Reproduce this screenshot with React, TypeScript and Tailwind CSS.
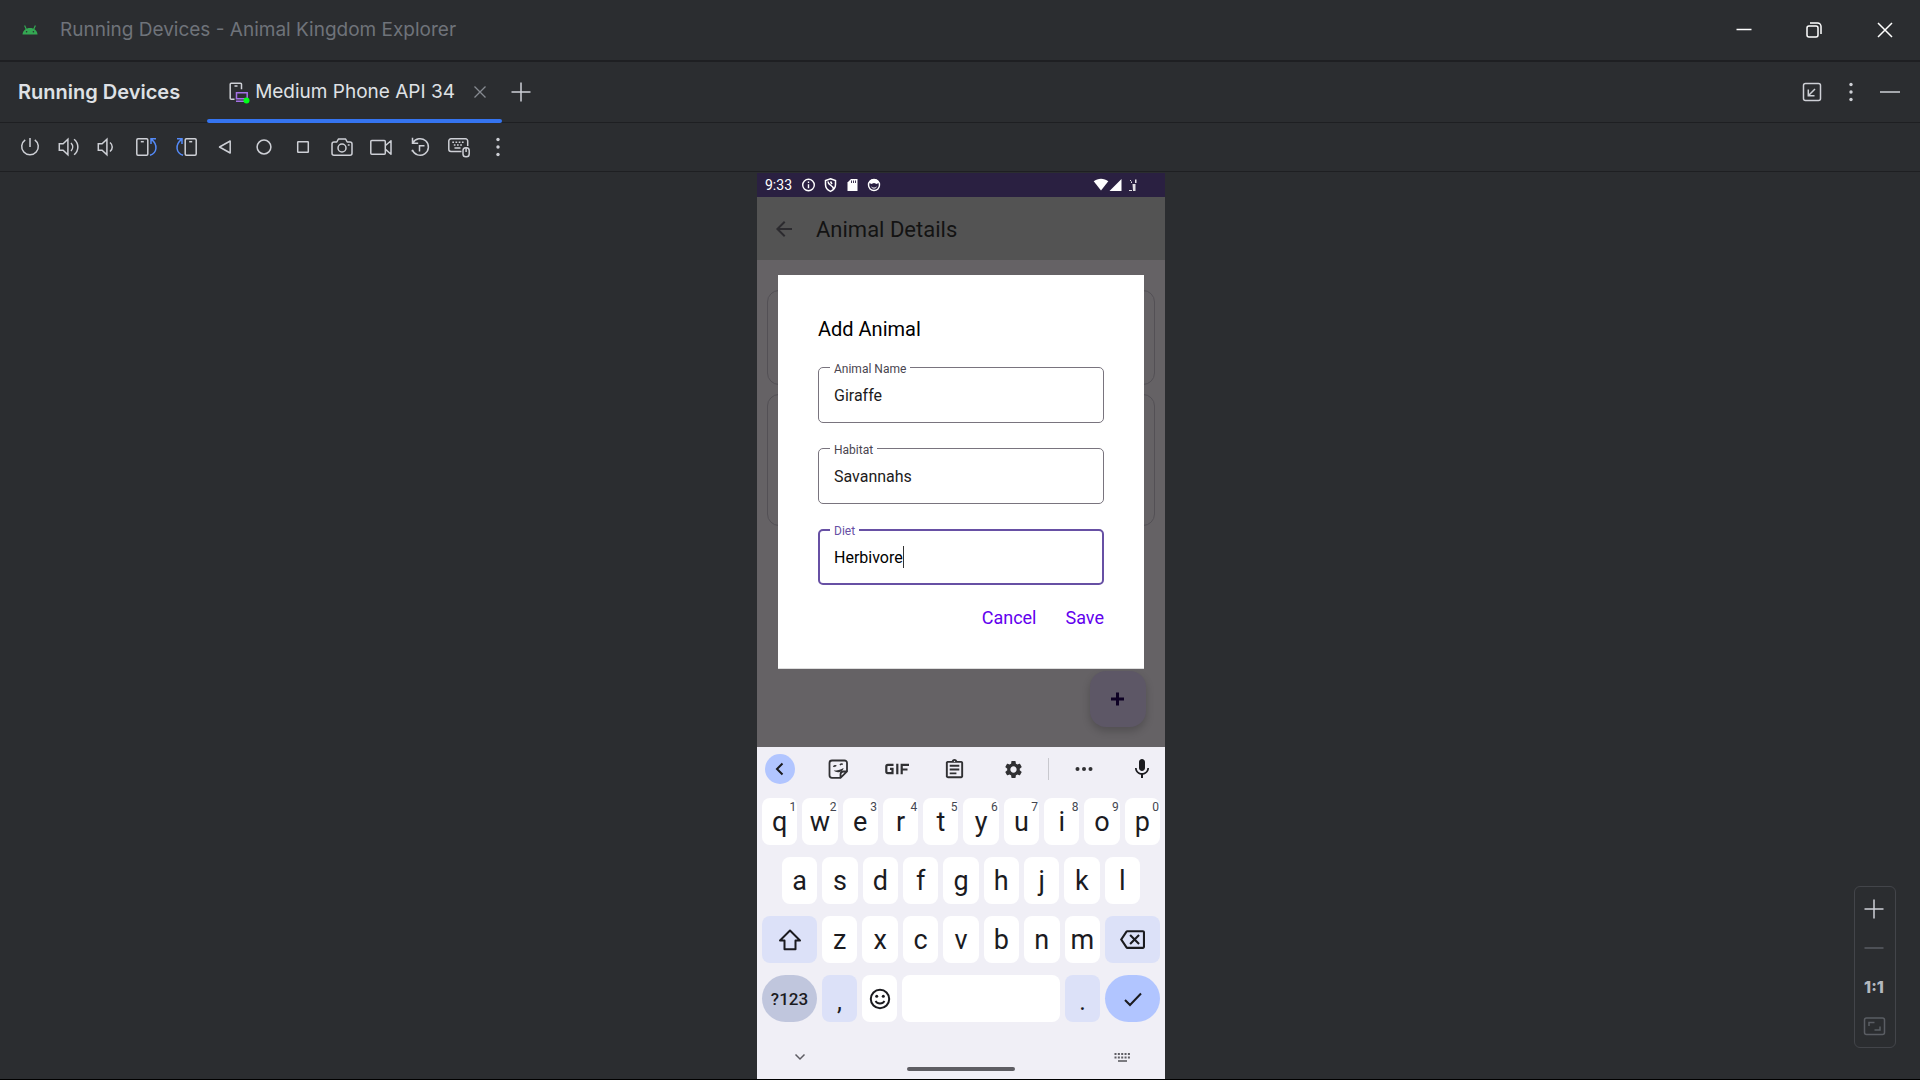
import React, { useState } from "react";
import {
  MdArrowBack,
  MdMic,
  MdOutlineAssignment,
  MdOutlineBackspace,
  MdSettings,
} from "react-icons/md";

type IconProps = { children: React.ReactNode; className?: string };

function Icon({ children, className = "" }: IconProps) {
  return (
    <svg
      viewBox="0 0 24 24"
      fill="none"
      stroke="currentColor"
      strokeWidth="1.5"
      className={`h-6 w-6 shrink-0 ${className}`}
      aria-hidden="true"
    >
      {children}
    </svg>
  );
}

const kebab = (
  <g fill="currentColor" stroke="none">
    <circle cx="12" cy="4.5" r="1.7" />
    <circle cx="12" cy="12" r="1.7" />
    <circle cx="12" cy="19.5" r="1.7" />
  </g>
);

const tools: { label: string; art: React.ReactNode }[] = [
  {
    label: "Power",
    art: <path d="M12 3v9M7.200 4.800a8.300 8.300 0 1 0 9.600 0" />,
  },
  {
    label: "Volume Up",
    art: (
      <path d="M2.300 8.700h3.800l4.800-4.500v15.600l-4.800-4.500h-3.800zM14 8c2.200 2.300 2.200 5.700 0 8M17.100 4.200c5 4.400 5 11.200 0 15.600" />
    ),
  },
  {
    label: "Volume Down",
    art: <path d="M2.300 8.700h3.800l4.800-4.500v15.600l-4.800-4.500h-3.800zM14 7.500c3 2.500 3 6.500 0 9" />,
  },
  {
    label: "Rotate Left",
    art: (
      <>
        <rect x="1.800" y="3.800" width="11" height="16.500" rx="1.200" />
        <path d="M5.800 6.700h3" />
        <path stroke="#548af7" d="M15 20.300c7-2.300 8.300-10.500 1.500-16M21 3.800h-5v5.200" />
      </>
    ),
  },
  {
    label: "Rotate Right",
    art: (
      <>
        <rect x="11.200" y="3.800" width="11" height="16.500" rx="1.200" />
        <path d="M15.200 6.700h3" />
        <path stroke="#548af7" d="M9 20.300c-7-2.300-8.300-10.500-1.500-16M3 3.800h5v5.200" />
      </>
    ),
  },
  { label: "Back", art: <path strokeLinejoin="round" d="M17.200 6v12L6.500 12z" /> },
  { label: "Home", art: <circle cx="12" cy="12" r="6.900" /> },
  { label: "Overview", art: <rect x="6.700" y="6.700" width="10.600" height="10.600" rx="0.500" /> },
  {
    label: "Take Screenshot",
    art: (
      <>
        <path
          strokeLinejoin="round"
          d="M4 7h2.800l1.600-3h7.200l1.600 3H20a2 2 0 0 1 2 2v9.300a2 2 0 0 1-2 2H4a2 2 0 0 1-2-2V9a2 2 0 0 1 2-2z"
        />
        <circle cx="12" cy="13" r="4" />
        <path d="M17.800 10h1.800" />
      </>
    ),
  },
  {
    label: "Record Screen",
    art: (
      <path
        strokeLinejoin="round"
        d="M2.800 5.500h12.500a1 1 0 0 1 1 1v11.800a1 1 0 0 1-1 1H2.800a1 1 0 0 1-1-1V6.500a1 1 0 0 1 1-1zM16.500 10.500l5.500-4.800v13.500l-5.500-4.800"
      />
    ),
  },
  {
    label: "Snapshots",
    art: <path d="M4.500 2.800v5.400h5.700M4.800 8a8.300 8.300 0 1 1-.5 6.800M4.300 15v1.500M11.500 16.500v-5.800h5" />,
  },
  {
    label: "Hardware Input",
    art: (
      <>
        <path d="M14.500 16.500H4a2.200 2.200 0 0 1-2.200-2.200V6A2.200 2.200 0 0 1 4 3.800h14.500A2.200 2.200 0 0 1 20.700 6v5" />
        <path strokeDasharray="1.700 1.500" d="M5.300 7.300h12.500M6.800 10h9" />
        <path d="M7.500 13h6" />
        <rect x="16" y="12.700" width="6.200" height="9" rx="2.800" />
        <path d="M19.100 13v4" />
      </>
    ),
  },
  { label: "More", art: kebab },
];

function TitleBar() {
  return (
    <header className="flex h-[62px] shrink-0 items-center border-b-2 border-[#1e1f22] pb-px pl-[18px]">
      <svg viewBox="0 0 24 24" className="h-6 w-6 shrink-0" aria-hidden="true">
        <path d="M4.500 16.500c.3-4 3.500-6.500 7.500-6.500s7.200 2.500 7.500 6.500z" fill="#34a853" />
        <path d="M8.300 11.200L6.600 7.500M15.700 11.200l1.700-3.700" stroke="#34a853" strokeWidth="1.200" />
        <circle cx="8.600" cy="13.700" r="0.800" fill="#2b2d30" />
        <circle cx="15.400" cy="13.700" r="0.800" fill="#2b2d30" />
      </svg>
      <h1 className="ml-[18px] grow text-[19px] leading-6 text-[#6f737a]">
        Running Devices - Animal Kingdom Explorer
      </h1>
      <div className="flex text-white">
        <button aria-label="Minimize" className="flex h-15 w-[70px] items-center justify-center">
          <Icon>
            <path d="M4.500 11.500h15" />
          </Icon>
        </button>
        <button aria-label="Restore" className="flex h-15 w-[70px] items-center justify-center">
          <Icon>
            <rect x="5" y="8" width="11" height="11" rx="2" />
            <path d="M8 5h7.500a3.500 3.500 0 0 1 3.500 3.500V16" />
          </Icon>
        </button>
        <button aria-label="Close" className="flex h-15 w-[71px] items-center justify-center">
          <Icon>
            <path d="M5 5l14 14M19 5L5 19" />
          </Icon>
        </button>
      </div>
    </header>
  );
}

function TabBar() {
  return (
    <div className="flex h-[61px] shrink-0 border-b border-[#1e1f22] pl-[18px] text-[#dfe1e5]">
      <h2 className="flex items-center text-[20px] leading-6 font-semibold">Running Devices</h2>
      <div className="relative ml-[27px] flex w-[295px] items-center pl-5">
        <Icon>
          <path stroke="#ced0d6" d="M7.500 19.300H4.200a1 1 0 0 1-1-1V4.200a1 1 0 0 1 1-1h9.300a1 1 0 0 1 1 1v5M7.500 6h3" />
          <path stroke="#a571e6" d="M9.500 12.800h10.700v6H9.500zM9 21.300h8" />
          <circle cx="19.500" cy="20.500" r="3" fill="#00ff1a" stroke="none" />
        </Icon>
        <span className="ml-1 grow text-[19px] leading-6 whitespace-nowrap">Medium Phone API 34</span>
        <button aria-label="Close tab" className="mr-[10px] text-[#868a91]">
          <Icon>
            <path d="M6.500 6.500l11 11M17.500 6.500l-11 11" strokeWidth="1.300" />
          </Icon>
        </button>
        <div className="absolute inset-x-0 -bottom-px h-1 rounded-sm bg-[#3574f0]" />
      </div>
      <button aria-label="Add device" className="ml-[7px] text-[#ced0d6]">
        <Icon>
          <path d="M2.500 12h19M12 2.500v19" />
        </Icon>
      </button>
      <div className="ml-auto flex items-center gap-[15px] pr-[18px] text-[#ced0d6]">
        <button aria-label="Dock window">
          <Icon>
            <rect x="3.500" y="3.500" width="17" height="17" rx="2" />
            <path d="M15 9l-6.500 6.500M8.300 9.500v6.200h6.200" />
          </Icon>
        </button>
        <button aria-label="Options">
          <Icon>{kebab}</Icon>
        </button>
        <button aria-label="Hide">
          <Icon>
            <path d="M2 12h20" />
          </Icon>
        </button>
      </div>
    </div>
  );
}

function Toolbar() {
  return (
    <div className="flex h-[49px] shrink-0 items-center gap-[15px] border-b border-[#1e1f22] pl-[18px] text-[#ced0d6]">
      {tools.map((t) => (
        <button key={t.label} aria-label={t.label}>
          <Icon>{t.art}</Icon>
        </button>
      ))}
    </div>
  );
}

function StatusBar() {
  return (
    <div className="flex h-6 shrink-0 items-center bg-[#2a2041] pl-2 text-white">
      <span className="w-9 text-[14px] leading-5">9:33</span>
      <svg viewBox="0 0 80 16" className="h-4 w-20" fill="none" stroke="currentColor" aria-hidden="true">
        <circle cx="7.500" cy="8" r="5.800" strokeWidth="1.400" />
        <path d="M7.500 7.200v4M7.500 4.500v1.500" strokeWidth="1.400" />
        <path d="M29.500 1.800l5 1.800v4c0 3.200-2 5.600-5 6.800-3-1.200-5-3.600-5-6.800v-4z" strokeWidth="1.500" />
        <path d="M27 4.500c0 4 5 3 5.500 7.500M29.500 4.500l1.500 2.500" strokeWidth="1.500" />
        <path d="M50 2h6.500v12h-10V5.500z" fill="currentColor" stroke="none" />
        <path d="M50.500 3.500v2.500M52.500 3.500v2.500M54.500 3.500v2.500" stroke="#2a2041" strokeWidth="0.900" />
        <circle cx="73" cy="8" r="5.500" strokeWidth="1.400" />
        <path d="M68 5.500c.8-2.500 2.500-3.500 5-3.500s4.200 1 5 3.500l-2.200 1.500-2.800-1-2.800 1z" fill="currentColor" stroke="none" />
        <path d="M70.500 10c1.500 1.500 3.500 1.500 5 0" />
      </svg>
      <svg viewBox="0 0 48 16" className="mr-6 ml-auto h-4 w-12" fill="currentColor" aria-hidden="true">
        <path d="M8 13.500L.7 4.300C4.800.8 11.200.8 15.300 4.300z" />
        <path d="M28.500 2v12H16.500z" />
        <path d="M36 13h3v1h-3zM39.500 7h3v7h-2.500zM42 2.500h1.500V6H42zM38 4.500h1v1.500h-1zM37 3h1v1h-1z" opacity=".85" />
      </svg>
    </div>
  );
}

type FieldProps = {
  id: string;
  label: string;
  value: string;
  active?: boolean;
  onChange: (v: string) => void;
};

function Field({ id, label, value, active = false, onChange }: FieldProps) {
  return (
    <div className="relative">
      <label
        htmlFor={id}
        className={`absolute -top-1.5 left-3 bg-white px-1 text-[12px] leading-4 ${
          active ? "text-[#6750a4]" : "text-[#49454f]"
        }`}
      >
        {label}
      </label>
      <input
        id={id}
        value={value}
        onChange={(e) => onChange(e.target.value)}
        className={`block h-14 w-full rounded-[5px] bg-white text-[16px] leading-6 outline-none ${
          active ? "border-2 border-[#6750a4] px-[14px] text-black" : "border border-[#79747e] px-[15px] text-[#1d1b20]"
        }`}
      />
      {active && (
        <div className="pointer-events-none absolute inset-y-0 left-4 flex items-center text-[16px] leading-6" aria-hidden="true">
          <span className="invisible">{value}</span>
          <span className="h-[22px] w-px bg-[#333333]" />
        </div>
      )}
    </div>
  );
}

function AddAnimalDialog() {
  const [name, setName] = useState("Giraffe");
  const [habitat, setHabitat] = useState("Savannahs");
  const [diet, setDiet] = useState("Herbivore");
  return (
    <form
      role="dialog"
      aria-label="Add Animal"
      onSubmit={(e) => e.preventDefault()}
      className="absolute inset-x-[21px] top-[15px] border-b border-[#dddddd] bg-white px-10 pt-10 pb-[37px]"
    >
      <h3 className="text-[20px] leading-7 text-black">Add Animal</h3>
      <div className="mt-6 flex flex-col gap-[25px]">
        <Field id="name" label="Animal Name" value={name} onChange={setName} />
        <Field id="habitat" label="Habitat" value={habitat} onChange={setHabitat} />
        <Field id="diet" label="Diet" value={diet} onChange={setDiet} active />
      </div>
      <div className="mt-[19px] flex justify-end gap-[29px] text-[18px] leading-[27px] text-[#6200ee]">
        <button type="button">Cancel</button>
        <button type="submit">Save</button>
      </div>
    </form>
  );
}

function AppScreen() {
  return (
    <>
      <div className="flex h-[63px] shrink-0 items-center bg-[#535353] pl-[15px]">
        <button aria-label="Navigate up" className="text-[#2c2b2f]">
          <MdArrowBack size={24} />
        </button>
        <h2 className="ml-5 pt-0.5 text-[22px] leading-7 text-[#131313]">Animal Details</h2>
      </div>
      <div className="relative flex min-h-[480px] grow flex-col bg-[#656265] px-[10px] pt-[30px]">
        <div className="h-[95px] rounded-xl border border-[#535055]" />
        <div className="mt-[9px] h-[132px] rounded-xl border border-[#535055]" />
        <button
          aria-label="Add"
          className="mt-auto mr-[9px] mb-5 flex h-14 w-14 items-center justify-center self-end rounded-2xl bg-[#5d5766] text-[#0e0124] shadow-[0_4px_8px_rgba(0,0,0,0.2)]"
        >
          <Icon>
            <path d="M11.500 5.500v13M5 12h13" strokeWidth="3" />
          </Icon>
        </button>
        <AddAnimalDialog />
      </div>
    </>
  );
}

function Key({ label, hint }: { label: string; hint?: string }) {
  return (
    <button className="relative flex h-[47px] flex-1 items-center justify-center rounded-lg bg-white text-[27px] leading-8 text-[#1b1b1f]">
      {label}
      {hint && <span className="absolute top-px right-px text-[12px] leading-4 text-[#44464f]">{hint}</span>}
    </button>
  );
}

const wideKey = "flex h-[47px] w-[55px] shrink-0 items-center justify-center";

function Keyboard() {
  return (
    <div className="flex shrink-0 flex-col bg-[#f0eff6] text-[#1b1b1f]">
      <div className="flex h-[51px] items-center px-2 pb-[7px] text-[#303033]">
        <div className="flex grow items-center justify-between">
          <button aria-label="Collapse" className="flex h-[30px] w-[30px] items-center justify-center rounded-full bg-[#b1c5ff] text-[#1b1b1f]">
            <Icon>
              <path d="M14.500 6.500L9 12l5.500 5.500" strokeWidth="2" />
            </Icon>
          </button>
          <button aria-label="Stickers" className="flex w-[30px] justify-center">
            <Icon>
              <path
                d="M14.500 20.800H6A2.500 2.500 0 0 1 3.500 18.300V6A2.500 2.500 0 0 1 6 3.500h12.500A2.500 2.500 0 0 1 21 6v8.300zM21 14.500h-3.500a3 3 0 0 0-3 3v3.300"
                strokeWidth="1.800"
              />
              <path d="M7.500 9.800c.8-1.200 1.700-1.400 2.800-.8M14 8.200c.8-1.200 1.700-1.400 2.800-.8" strokeWidth="1.500" />
              <path d="M17.500 11c-.3 4-6.500 5.800-9.800 2.500 3.500 0 6.500-.6 9.800-2.500z" fill="currentColor" stroke="none" />
            </Icon>
          </button>
          <button aria-label="GIF" className="flex w-[30px] justify-center">
            <svg viewBox="0 0 24 12" className="h-3 w-6" fill="none" stroke="currentColor" strokeWidth="2.200" aria-hidden="true">
              <path d="M8.500 1.900H2.800a1.500 1.500 0 0 0-1.500 1.500v5.200a1.500 1.500 0 0 0 1.500 1.500h4.700V5.900H5M12.300.8v10.400M16.700 11.200V1.900H24M16.700 6.500h5.800" />
            </svg>
          </button>
          <button aria-label="Clipboard" className="flex w-[30px] justify-center">
            <MdOutlineAssignment size={23} />
          </button>
          <button aria-label="Settings" className="flex w-[30px] justify-center">
            <MdSettings size={21} />
          </button>
        </div>
        <div className="mx-5 h-[22px] w-px bg-[#c8c8ce]" />
        <button aria-label="More" className="mr-[28px] flex w-[30px] justify-center">
          <Icon className="rotate-90">
            <g fill="currentColor" stroke="none">
              <circle cx="12" cy="5.500" r="2" />
              <circle cx="12" cy="12" r="2" />
              <circle cx="12" cy="18.500" r="2" />
            </g>
          </Icon>
        </button>
        <button aria-label="Voice input" className="flex w-[30px] justify-center text-[#1b1b1f]">
          <MdMic size={24} />
        </button>
      </div>

      <div className="flex flex-col gap-3 px-[5px]">
        <div className="flex gap-[5px]">
          {"qwertyuiop".split("").map((c, i) => (
            <Key key={c} label={c} hint={String((i + 1) % 10)} />
          ))}
        </div>
        <div className="flex gap-[5px] px-5">
          {"asdfghjkl".split("").map((c) => (
            <Key key={c} label={c} />
          ))}
        </div>
        <div className="flex gap-[5px]">
          <button aria-label="Shift" className={`${wideKey} rounded-lg bg-[#dce1f8]`}>
            <Icon>
              <path d="M12 2.500L22 12.500h-4.500v8.700h-11v-8.700H2z" strokeWidth="2" strokeLinejoin="round" />
            </Icon>
          </button>
          {"zxcvbnm".split("").map((c) => (
            <Key key={c} label={c} />
          ))}
          <button aria-label="Backspace" className={`${wideKey} rounded-lg bg-[#dce1f8]`}>
            <MdOutlineBackspace size={25} />
          </button>
        </div>
        <div className="flex gap-[5px]">
          <button className={`${wideKey} rounded-full bg-[#c0c6dd] text-[17px] leading-6 font-medium`}>?123</button>
          <button className="flex h-[47px] w-[35px] items-end justify-center rounded-lg bg-[#dce1f8] pb-1 text-[25px] leading-8">
            ,
          </button>
          <button aria-label="Emoji" className="flex h-[47px] w-[35px] items-center justify-center rounded-lg bg-white">
            <Icon>
              <circle cx="12" cy="12" r="9.200" strokeWidth="2" />
              <path d="M7.500 14c1.800 3.300 7.200 3.300 9 0" strokeWidth="1.800" />
              <circle cx="8.700" cy="9.300" r="1.500" fill="currentColor" stroke="none" />
              <circle cx="15.300" cy="9.300" r="1.500" fill="currentColor" stroke="none" />
            </Icon>
          </button>
          <button aria-label="Space" className="h-[47px] grow rounded-lg bg-white" />
          <button className="flex h-[47px] w-[35px] items-end justify-center rounded-lg bg-[#dce1f8] pb-1 text-[25px] leading-8">
            .
          </button>
          <button aria-label="Done" className={`${wideKey} rounded-full bg-[#b1c5ff]`}>
            <Icon>
              <path d="M4 13l5 5L20 6.500" strokeWidth="2" />
            </Icon>
          </button>
        </div>
      </div>

      <div className="mt-[23px] flex justify-between px-[31px] text-[#5e5d63]">
        <button aria-label="Hide keyboard">
          <Icon>
            <path d="M7.500 9.500L12 14l4.500-4.500" />
          </Icon>
        </button>
        <button aria-label="Switch keyboard">
          <Icon>
            <path d="M4.500 9h15.500M4.500 12.500h15.500" strokeWidth="2" strokeDasharray="2 1.350" />
            <path d="M8 16h9" strokeWidth="1.600" />
          </Icon>
        </button>
      </div>
      <div className="mt-[-2px] mb-2 h-1 w-[108px] self-center rounded-full bg-[#5e5d63]" />
    </div>
  );
}

function ZoomControls() {
  return (
    <div className="absolute right-6 bottom-[31px] flex flex-col items-center gap-[15px] rounded-md border border-[#43454a] pt-[10px] pr-[9px] pb-[9px] pl-[7px]">
      <button aria-label="Zoom in" className="text-[#ced0d6]">
        <Icon>
          <path d="M2.500 12h19M12 2.500v19" />
        </Icon>
      </button>
      <button aria-label="Zoom out" className="text-[#5a5d63]">
        <Icon>
          <path d="M2.500 12h19" />
        </Icon>
      </button>
      <button className="h-6 text-[16px] leading-6 font-extrabold text-[#b4b8bf]">1:1</button>
      <button aria-label="Zoom to fit" className="text-[#5a5d63]">
        <Icon>
          <rect x="2.500" y="4" width="20" height="16.500" rx="2" />
          <path d="M7 12V8.500h5.500M18 12.500V16h-5.500" />
        </Icon>
      </button>
    </div>
  );
}

export default function App() {
  return (
    <div className="flex min-h-screen flex-col border-b border-black bg-[#2b2d30] font-['Inter',sans-serif]">
      <TitleBar />
      <TabBar />
      <Toolbar />
      <main className="relative flex grow flex-col items-center pt-px">
        <section
          aria-label="Medium Phone API 34"
          className="ml-[2px] flex w-[408px] grow flex-col font-['Roboto',sans-serif]"
        >
          <StatusBar />
          <AppScreen />
          <Keyboard />
        </section>
        <ZoomControls />
      </main>
    </div>
  );
}
